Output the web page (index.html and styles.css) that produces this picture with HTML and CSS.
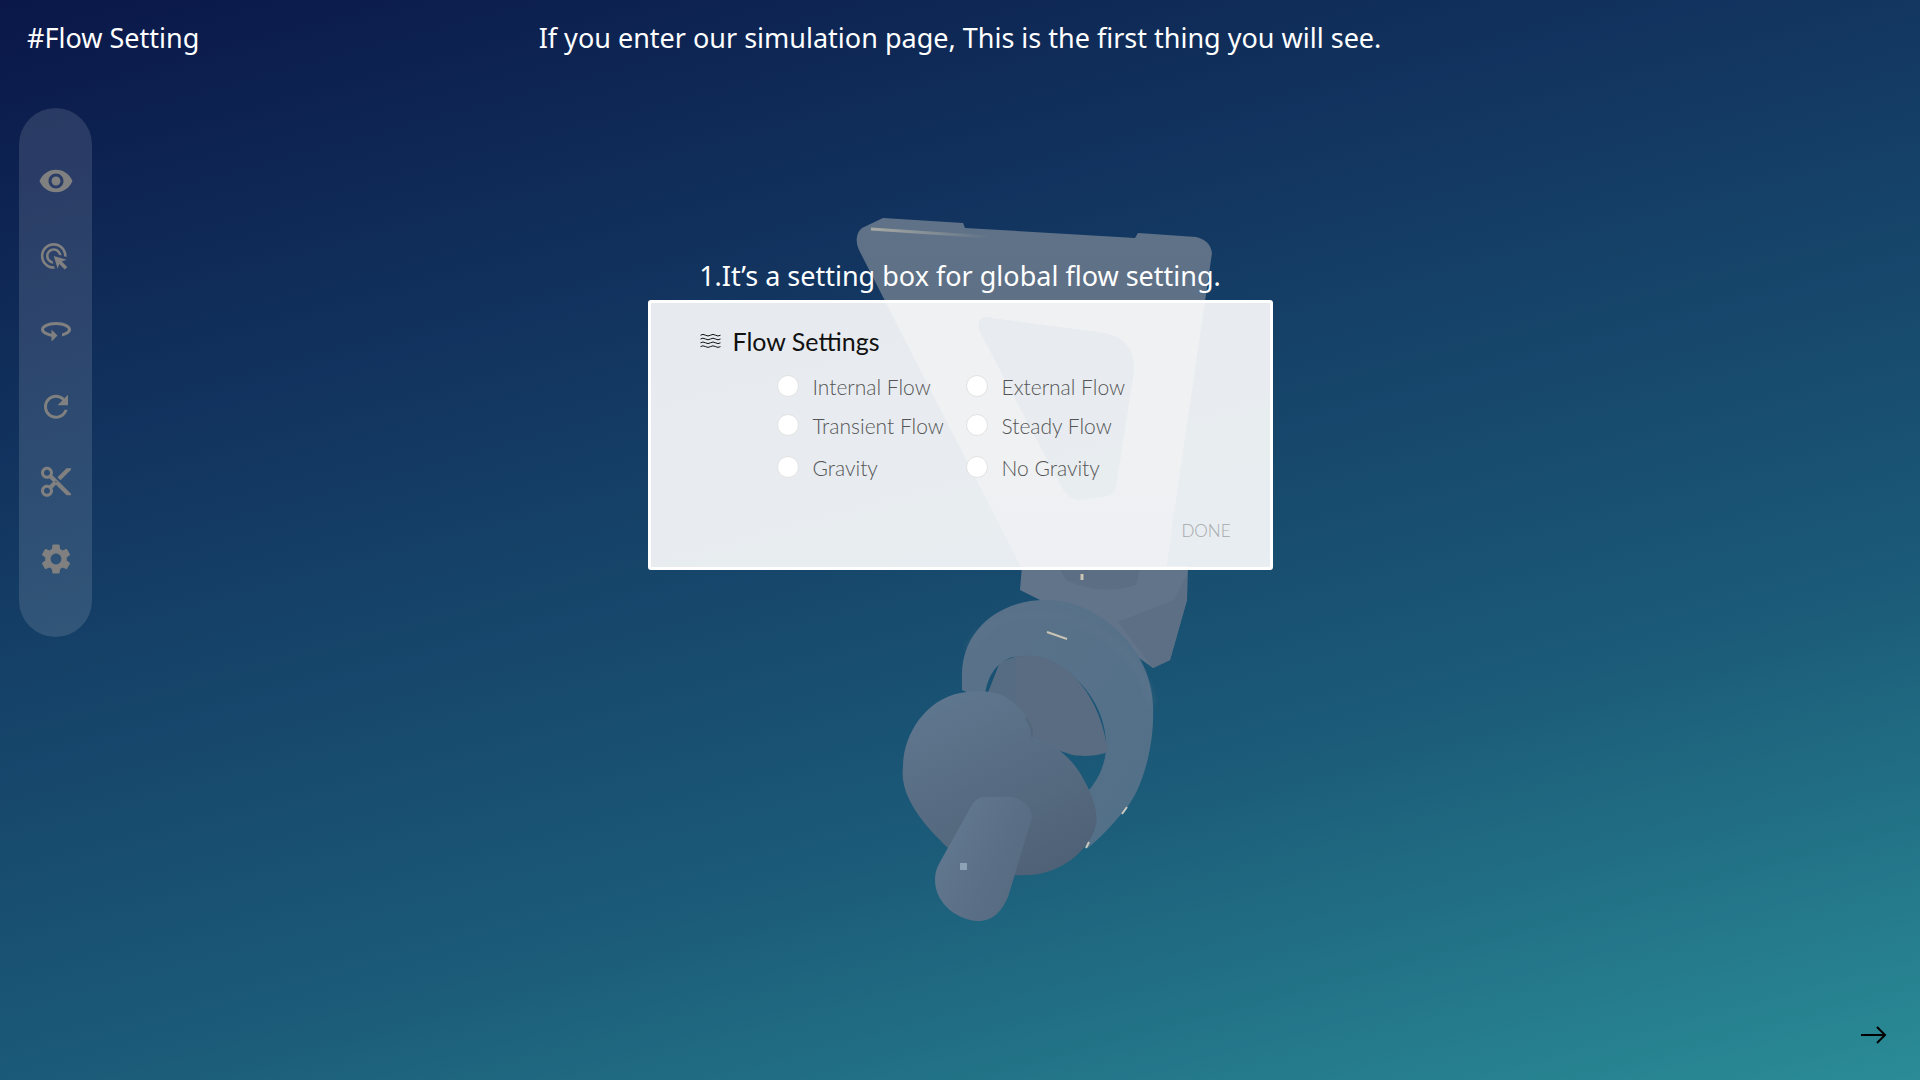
FILE: index.html
```html
<!DOCTYPE html>
<html lang="en">
<head>
    <meta charset="UTF-8">
    <title>Flow Setting</title>
    <link rel="stylesheet" href="styles.css">
</head>
<body>
    <div class="page">
        <!-- 3D part, sits on the canvas behind everything -->
        <svg class="model" viewBox="0 0 1920 1080">
            <defs>
                <linearGradient id="plateFill" x1="0" y1="0" x2="0" y2="1">
                    <stop offset="0" stop-color="#5f7288"/>
                    <stop offset="1" stop-color="#5b6b80"/>
                </linearGradient>
                <linearGradient id="ringFill" x1="0" y1="0" x2="1" y2="1">
                    <stop offset="0" stop-color="#5a7289"/>
                    <stop offset="1" stop-color="#527089"/>
                </linearGradient>
                <linearGradient id="ballFill" x1="0.2" y1="0" x2="0.7" y2="1">
                    <stop offset="0" stop-color="#5f778f"/>
                    <stop offset="1" stop-color="#4f6176"/>
                </linearGradient>
                <linearGradient id="stemFill" x1="0" y1="0" x2="1" y2="0.6">
                    <stop offset="0" stop-color="#647b93"/>
                    <stop offset="1" stop-color="#566a80"/>
                </linearGradient>
                <linearGradient id="glint" x1="0" y1="0" x2="1" y2="0">
                    <stop offset="0" stop-color="#a8a9a3"/>
                    <stop offset="1" stop-color="#a8a9a3" stop-opacity="0"/>
                </linearGradient>
                <filter id="soft">
                    <feGaussianBlur stdDeviation="3"/>
                </filter>
            </defs>
            <path fill="url(#plateFill)" fill-rule="evenodd" d="M883 218 L963 223 L965 228 L1135 238 L1138 233 L1196 237 Q1210 240 1212 253 L1166 569 L1022 569 L859 250 Q853 236 862 228 Z M985 317 Q977 318 979 330 L1062 488 Q1068 499 1080 500 L1108 496 Q1115 494 1116 486 L1134 372 Q1136 340 1105 333 Z"/>
            <path fill="#617489" d="M1022 566 L1188 566 L1187 600 L1170 660 L1153 668 L1100 630 L1020 590 Z"/>
            <path fill="#5c6f84" d="M1118 622 L1174 600 L1187 575 L1187 600 L1170 660 L1153 668 Z"/>
            <path fill="#5b6e84" d="M1060 569 L1140 569 L1136 585 Q1100 596 1066 580 Z"/>
            <path fill="#566c82" d="M985 700 L1000 662 L1020 655 L1030 740 L1012 710 Z"/>
            <path fill="url(#ringFill)" fill-rule="evenodd" d="M962 675 C962 630 1000 598 1050 600 C1100 602 1152 650 1153 705 C1155 750 1140 795 1123 812 C1112 825 1100 838 1088 848 L1072 805 C1095 790 1108 765 1106 740 C1103 690 1055 650 1013 657 C995 662 985 680 985 700 L962 690 Z"/>
            <path fill="none" stroke="#64798f" stroke-width="5" opacity="0.4" filter="url(#soft)" d="M968 650 C990 612 1040 605 1085 625 C1120 640 1145 670 1152 705"/>
            <path fill="#596c82" d="M1016 657 C1060 648 1100 690 1108 752 C1095 757 1075 757 1067 753 C1055 750 1040 745 1030 735 L1015 700 Z"/>
            <path fill="url(#ballFill)" d="M960 693 C980 690 1000 690 1012 702 C1026 712 1032 725 1033 737 C1050 742 1072 755 1085 782 C1095 800 1098 815 1096 825 C1090 850 1060 875 1027 875 C1005 877 985 870 973 860 C960 855 948 850 940 840 C915 815 900 790 903 767 C903 735 925 700 960 693 Z"/>
            <path fill="none" stroke="#4e6177" stroke-width="2" opacity="0.6" d="M1026 718 Q1033 728 1032 737"/>
            <path fill="url(#stemFill)" d="M983 797 L1012 797 Q1030 802 1032 817 L1008 897 C1000 915 990 921 978 921 C960 921 935 905 935 880 C935 872 937 868 940 862 L973 803 Q977 798 983 797 Z"/>
            <path fill="none" stroke="url(#glint)" stroke-width="3" d="M871 229 L990 237"/>
            <path fill="none" stroke="#c9c4b4" stroke-width="2" d="M1047 632 L1067 639"/>
            <path fill="none" stroke="#c9c4b4" stroke-width="3" d="M1082 574 L1082 580"/>
            <path fill="none" stroke="#c9c9bf" stroke-width="2" d="M1089 842 L1086 848 M1127 807 L1122 814"/>
            <rect x="960" y="863" width="7" height="7" fill="#8ea2b5"/>
        </svg>

        <header class="top-bar">
            <div class="tag">#Flow Setting</div>
            <div class="headline">If you enter our simulation page, This is the first thing you will see.</div>
        </header>

        <div class="stage">
            <nav class="toolbar">
                <svg class="tool" viewBox="0 0 24 24"><path d="M12 4.5C7 4.5 2.73 7.61 1 12c1.73 4.39 6 7.5 11 7.5s9.27-3.11 11-7.5c-1.73-4.39-6-7.5-11-7.5zM12 17c-2.76 0-5-2.24-5-5s2.24-5 5-5 5 2.24 5 5-2.24 5-5 5zm0-8c-1.66 0-3 1.34-3 3s1.34 3 3 3 3-1.34 3-3-1.34-3-3-3z"/></svg>
                <svg class="tool" viewBox="1.5 0.7 24 24"><g transform="translate(12 12) scale(0.86) translate(-12 -12)"><path d="M11.71 17.99C8.53 17.84 6 15.22 6 12c0-3.31 2.69-6 6-6 3.22 0 5.84 2.53 5.99 5.71l-2.1-.63C15.48 9.31 13.89 8 12 8c-2.21 0-4 1.79-4 4 0 1.89 1.31 3.48 3.08 3.89l.63 2.1zM22 12c0 .3-.01.6-.04.9l-1.97-.59c.01-.1.01-.21.01-.31 0-4.42-3.58-8-8-8s-8 3.58-8 8 3.58 8 8 8c.1 0 .21 0 .31-.01l.59 1.97c-.3.03-.6.04-.9.04-5.52 0-10-4.48-10-10S6.48 2 12 2s10 4.48 10 10zm-3.77 4.26L22 15l-10-3 3 10 1.26-3.77 4.27 4.27 1.98-1.98-4.28-4.26z"/></g></svg>
                <svg class="tool" viewBox="0 1.6 24 24"><path d="M12 7C6.48 7 2 9.24 2 12c0 2.24 2.94 4.13 7 4.77V20l4-4-4-4v2.73c-3.15-.56-5-1.9-5-2.73 0-1.06 3.04-3 8-3s8 1.94 8 3c0 .73-1.46 1.89-4 2.53v2.05c3.53-.77 6-2.53 6-4.58 0-2.76-4.48-5-10-5z"/></svg>
                <svg class="tool" viewBox="0 0.8 24 24"><path d="M17.65 6.35C16.2 4.9 14.21 4 12 4c-4.42 0-7.99 3.58-7.99 8s3.57 8 7.99 8c3.73 0 6.84-2.55 7.73-6h-2.08c-.82 2.33-3.04 4-5.65 4-3.31 0-6-2.69-6-6s2.69-6 6-6c1.66 0 3.14.69 4.22 1.78L13 11h7V4l-2.35 2.35z"/></svg>
                <svg class="tool" viewBox="0 0.8 24 24"><path d="M9.64 7.64c.23-.5.36-1.05.36-1.64 0-2.21-1.79-4-4-4S2 3.79 2 6s1.79 4 4 4c.59 0 1.14-.13 1.64-.36L10 12l-2.36 2.36C7.14 14.13 6.59 14 6 14c-2.21 0-4 1.79-4 4s1.79 4 4 4 4-1.79 4-4c0-.59-.13-1.14-.36-1.64L12 14l7 7h3v-1L9.64 7.64zM6 8c-1.1 0-2-.89-2-2s.9-2 2-2 2 .89 2 2-.9 2-2 2zm0 12c-1.1 0-2-.89-2-2s.9-2 2-2 2 .89 2 2-.9 2-2 2zm6-7.5c-.28 0-.5-.22-.5-.5s.22-.5.5-.5.5.22.5.5-.22.5-.5.5zM19 3l-6 6 2 2 7-7V3z"/></svg>
                <svg class="tool" viewBox="0 0 24 24"><path d="M19.14 12.94c.04-.3.06-.61.06-.94 0-.32-.02-.64-.07-.94l2.03-1.58c.18-.14.23-.41.12-.61l-1.92-3.32c-.12-.22-.37-.29-.59-.22l-2.39.96c-.5-.38-1.03-.7-1.62-.94l-.36-2.54c-.04-.24-.24-.41-.48-.41h-3.84c-.24 0-.43.17-.47.41l-.36 2.54c-.59.24-1.13.57-1.62.94l-2.39-.96c-.22-.08-.47 0-.59.22L2.74 8.87c-.12.21-.08.47.12.61l2.03 1.58c-.05.3-.09.63-.09.94s.02.64.07.94l-2.03 1.58c-.18.14-.23.41-.12.61l1.92 3.32c.12.22.37.29.59.22l2.39-.96c.5.38 1.03.7 1.62.94l.36 2.54c.05.24.24.41.48.41h3.84c.24 0 .44-.17.47-.41l.36-2.54c.59-.24 1.13-.56 1.62-.94l2.39.96c.22.08.47 0 .59-.22l1.92-3.32c.12-.22.07-.47-.12-.61l-2.01-1.58zM12 15.6c-1.98 0-3.6-1.62-3.6-3.6s1.62-3.6 3.6-3.6 3.6 1.62 3.6 3.6-1.62 3.6-3.6 3.6z"/></svg>
            </nav>

            <main class="center">
                <div class="caption">1.It’s a setting box for global flow setting.</div>
                <section class="dialog">
                    <div class="dialog-title">
                        <svg class="waves" viewBox="0 0 20 14">
                            <path d="M0 1.2 q2.5 -1.6 5 0 t5 0 t5 0 t5 0"/>
                            <path d="M0 5 q2.5 -1.6 5 0 t5 0 t5 0 t5 0"/>
                            <path d="M0 8.8 q2.5 -1.6 5 0 t5 0 t5 0 t5 0"/>
                            <path d="M0 12.6 q2.5 -1.6 5 0 t5 0 t5 0 t5 0"/>
                        </svg>
                        <span>Flow Settings</span>
                    </div>
                    <div class="options">
                        <label class="option"><span class="radio"></span>Internal Flow</label>
                        <label class="option"><span class="radio"></span>External Flow</label>
                        <label class="option"><span class="radio"></span>Transient Flow</label>
                        <label class="option"><span class="radio"></span>Steady Flow</label>
                        <label class="option"><span class="radio"></span>Gravity</label>
                        <label class="option"><span class="radio"></span>No Gravity</label>
                    </div>
                    <div class="dialog-actions">
                        <span class="done">DONE</span>
                    </div>
                </section>
            </main>
        </div>

        <footer class="bottom-bar">
            <svg class="next" viewBox="0 0 26 18"><path d="M0 9 H24 M16 1 L24 9 L16 17"/></svg>
        </footer>
    </div>
</body>
</html>
```

FILE: styles.css
```css
* {
    box-sizing: border-box;
}
html, body {
    margin: 0;
    padding: 0;
}
body {
    font-family: "Noto Sans", Arial, sans-serif;
    color: #fff;
}
.page {
    position: relative;
    width: 1920px;
    height: 1080px;
    overflow: hidden;
    display: flex;
    flex-direction: column;
    background: linear-gradient(165deg, #0a1748 0%, #12345f 30%, #1b5a78 68%, #2a8c96 100%);
}
.model {
    position: absolute;
    left: 0;
    top: 0;
    width: 1920px;
    height: 1080px;
}
.top-bar {
    position: relative;
    display: grid;
    grid-template-columns: 1fr auto 1fr;
    height: 108px;
    padding: 20px 0 0 27px;
    font-size: 27px;
    line-height: 36px;
}
.headline {
    margin-left: -27px;
}
.stage {
    position: relative;
    flex: 1;
    display: grid;
    grid-template-columns: 1fr 625px 1fr;
}
.toolbar {
    grid-column: 1;
    justify-self: start;
    margin-left: 19px;
    width: 73px;
    height: 529px;
    padding-top: 55px;
    border-radius: 37px;
    background: rgba(255, 255, 255, 0.12);
    display: flex;
    flex-direction: column;
    align-items: center;
    gap: 39.6px;
}
.tool {
    width: 36px;
    height: 36px;
    flex: none;
    fill: #808080;
}
.center {
    grid-column: 2;
    padding-top: 150px;
}
.caption {
    text-align: center;
    font-size: 27px;
    line-height: 36px;
    margin-bottom: 6px;
}
.dialog {
    height: 270px;
    padding: 22px 39px 0 49px;
    background: rgba(255, 255, 255, 0.9);
    border: 3px solid #fff;
    border-radius: 3px;
    font-family: "Lato", "Noto Sans", sans-serif;
}
.dialog-title {
    display: flex;
    align-items: center;
    gap: 12px;
    height: 32px;
    color: #111;
    font-size: 25px;
}
.waves {
    width: 21px;
    height: 14px;
    fill: none;
    stroke: #111;
    stroke-width: 1;
}
.options {
    display: grid;
    grid-template-columns: 189px auto;
    grid-template-rows: 39px 39px 45px;
    margin: 10px 0 0 77px;
    font-size: 21px;
    font-weight: 300;
    color: #555;
}
.option {
    display: flex;
    align-items: center;
    gap: 14px;
}
.radio {
    width: 22px;
    height: 22px;
    flex: none;
    border-radius: 50%;
    background: #fff;
    border: 1px solid #e2e2e2;
    margin-bottom: 1px;
}
.dialog-actions {
    display: flex;
    justify-content: flex-end;
    margin-top: 30px;
}
.done {
    font-size: 17px;
    font-weight: 300;
    color: #a5a8aa;
}
.bottom-bar {
    position: absolute;
    right: 33px;
    bottom: 36px;
}
.next {
    display: block;
    width: 26px;
    height: 18px;
    fill: none;
    stroke: #000;
    stroke-width: 2;
}
```
